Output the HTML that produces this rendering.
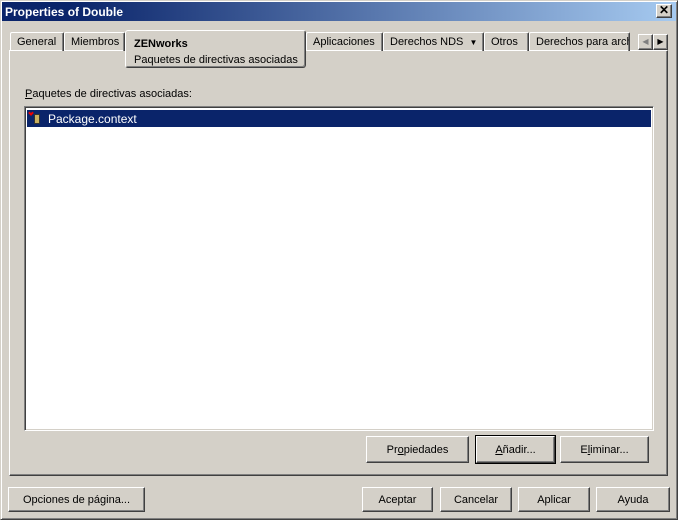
<!DOCTYPE html><html><head><style>
*{margin:0;padding:0;box-sizing:border-box}
body{width:678px;height:520px;background:#d4d0c8;font-family:"Liberation Sans",sans-serif;font-size:11px;color:#000;position:relative;overflow:hidden}
.a{position:absolute}
.win{left:0;top:0;width:678px;height:520px;border:1px solid;border-color:#d4d0c8 #404040 #404040 #d4d0c8;box-shadow:inset 1px 1px #fff,inset -1px -1px #808080}
.title{left:2px;top:2px;width:674px;height:19px;background:linear-gradient(90deg,#0a246a 10%,#a6caf0);color:#fff;font-weight:bold;font-size:12px;line-height:20px;padding-left:3px}
.btn{position:absolute;border:1px solid;border-color:#fff #404040 #404040 #fff;box-shadow:inset -1px -1px #808080;text-align:center;background:#d4d0c8}
.tab{position:absolute;top:32px;height:19px;border:1px solid;border-bottom:none;border-color:#fff #404040 #fff #fff;border-radius:2px 2px 0 0;box-shadow:inset -1px 0 #808080;line-height:19px;padding-left:6px;white-space:nowrap;overflow:hidden}
</style></head><body>
<div class="a win"></div>
<div class="a title">Properties of Double</div>
<div class="btn" style="left:656px;top:4px;width:16px;height:14px;font-size:12px;line-height:11px;font-weight:bold">✕</div>
<div class="a" style="left:9px;top:50px;width:659px;height:426px;border:1px solid;border-color:#fff #404040 #404040 #fff;box-shadow:inset -1px -1px #808080"></div>
<div class="tab" style="left:10px;width:54px">General</div>
<div class="tab" style="left:64px;width:61px">Miembros</div>
<div class="tab" style="left:306px;width:77px">Aplicaciones</div>
<div class="tab" style="left:383px;width:101px">Derechos NDS &nbsp;<span style="font-size:8px">▼</span></div>
<div class="tab" style="left:484px;width:45px">Otros</div>
<div class="tab" style="left:529px;width:101px">Derechos para archivos</div>
<div class="a" style="left:125px;top:30px;width:181px;height:38px;background:#d4d0c8;border:1px solid;border-color:#fff #404040 #404040 #fff;border-radius:3px;box-shadow:inset -1px -1px #808080;padding:5px 0 0 8px;line-height:16px"><b>ZENworks</b><br>Paquetes de directivas asociadas</div>
<div class="btn" style="left:638px;top:34px;width:15px;height:16px;font-size:8px;line-height:14px;color:#808080">◀</div>
<div class="btn" style="left:653px;top:34px;width:15px;height:16px;font-size:8px;line-height:14px">▶</div>
<div class="a" style="left:25px;top:88px"><u>P</u>aquetes de directivas asociadas:</div>
<div class="a" style="left:24px;top:106px;width:630px;height:325px;background:#fff;border:1px solid;border-color:#808080 #fff #fff #808080;box-shadow:inset 1px 1px #404040,inset -1px -1px #d4d0c8"></div>
<div class="a" style="left:27px;top:110px;width:624px;height:17px;background:#0a246a;color:#fff;font-size:12px;line-height:18px;padding-left:21px">Package.context</div>
<div class="a" style="left:29px;top:111px;width:4px;height:4px;border-left:2px solid #e00;border-bottom:2px solid #e00;transform:rotate(-45deg)"></div>
<div class="a" style="left:34px;top:114px;width:6px;height:10px;background:#c8b060;border:1px solid #333"></div>
<div class="btn" style="left:366px;top:436px;width:103px;height:27px;line-height:27px">Pr<u>o</u>piedades</div>
<div class="btn" style="left:476px;top:436px;width:79px;height:27px;line-height:27px;outline:1px solid #000"><u>A</u>ñadir...</div>
<div class="btn" style="left:560px;top:436px;width:89px;height:27px;line-height:27px">E<u>l</u>iminar...</div>
<div class="btn" style="left:8px;top:487px;width:137px;height:25px;line-height:25px">Opciones de página...</div>
<div class="btn" style="left:362px;top:487px;width:71px;height:25px;line-height:25px">Aceptar</div>
<div class="btn" style="left:440px;top:487px;width:72px;height:25px;line-height:25px">Cancelar</div>
<div class="btn" style="left:518px;top:487px;width:72px;height:25px;line-height:25px">Aplicar</div>
<div class="btn" style="left:596px;top:487px;width:74px;height:25px;line-height:25px">Ayuda</div>
</body></html>
